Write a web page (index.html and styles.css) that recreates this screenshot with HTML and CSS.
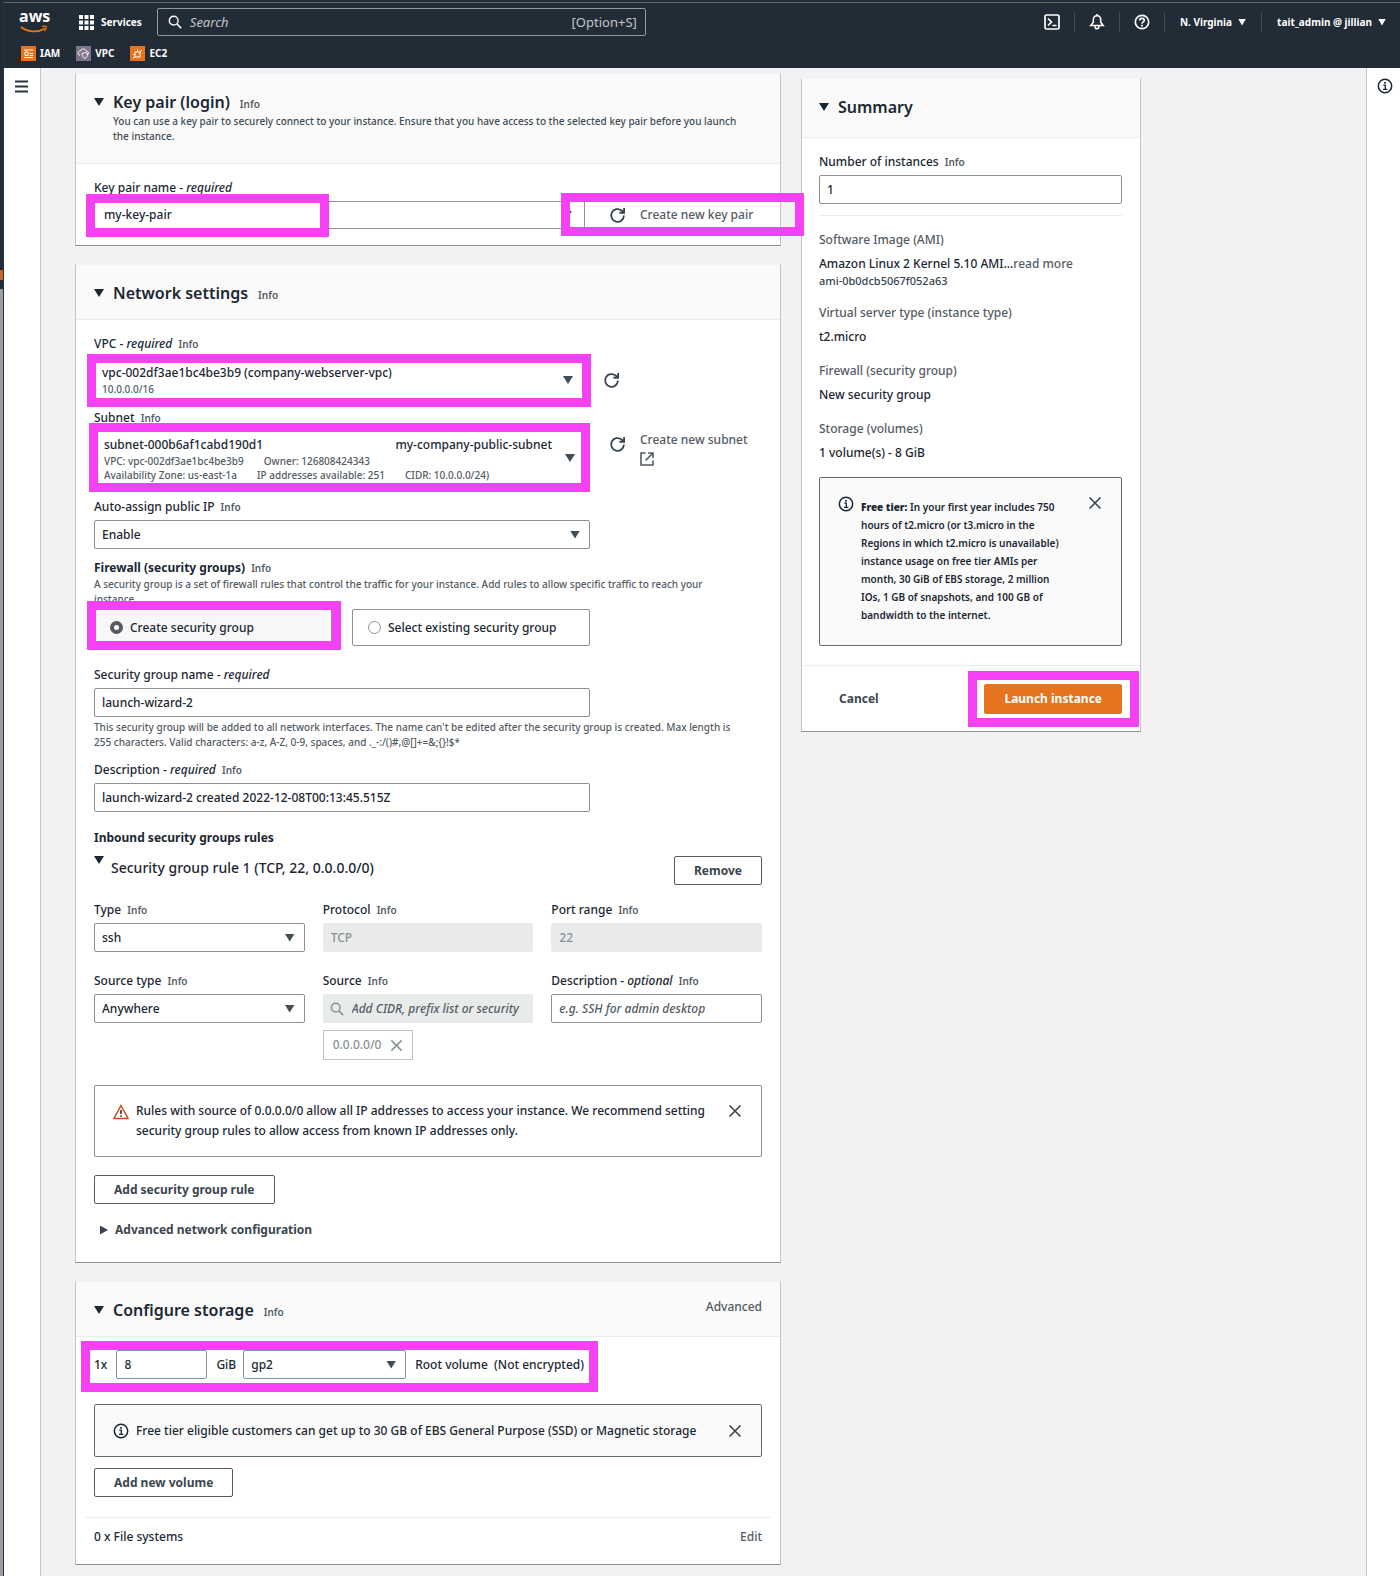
FILE: index.html
```html
<!DOCTYPE html>
<html lang="en">
<head>
<meta charset="utf-8">
<meta name="viewport" content="width=device-width, initial-scale=1">
<title>Launch an instance | EC2</title>
<link rel="stylesheet" href="styles.css">
</head>
<body>
<svg class="defs" width="0" height="0" aria-hidden="true">
  <symbol id="refresh" viewBox="0 0 16 16"><path d="M14 8a6 6 0 1 1-2.2-4.7L14 5" fill="none" stroke="currentColor" stroke-width="1.7"/><path d="M14.2 1v4.4H9.8" fill="none" stroke="currentColor" stroke-width="1.7"/></symbol>
  <symbol id="close" viewBox="0 0 14 14"><path d="M1.5 1.5l11 11M12.500 1.500l-11 11" fill="none" stroke="currentColor" stroke-width="1.6"/></symbol>
  <symbol id="info" viewBox="0 0 16 16"><circle cx="8" cy="8" r="6.700" fill="none" stroke="currentColor" stroke-width="1.500"/><path d="M6.300 7.200H8.300V11.200M6 11.300h4.400" fill="none" stroke="currentColor" stroke-width="1.300"/><rect x="7.100" y="4" width="1.700" height="1.700" fill="currentColor"/></symbol>
  <symbol id="search" viewBox="0 0 16 16"><circle cx="6.500" cy="6.500" r="5" fill="none" stroke="currentColor" stroke-width="1.600"/><path d="M10 10l5 5" fill="none" stroke="currentColor" stroke-width="1.800"/></symbol>
</svg>
<div class="page">
  <div class="edge"></div>
  <div class="console">
    <header class="topbar">
      <div class="bar">
        <a class="logo" href="#" aria-label="aws">
          <span>aws</span>
          <svg width="30" height="9" viewBox="0 0 30 9"><path d="M2 2c7 5.500 17 5.800 24 1.500" fill="none" stroke="#ec7211" stroke-width="1.800"/><path d="M23 1.500c3-.8 4.500-.5 4.300.4-.1 1.600-.7 3-1.800 4.300" fill="none" stroke="#ec7211" stroke-width="1.300"/></svg>
        </a>
        <button class="services" type="button">
          <svg width="15" height="15" viewBox="0 0 15 15" fill="#fff"><path d="M0 0h4v4H0zM5.500 0h4v4h-4zM11 0h4v4h-4zM0 5.500h4v4H0zM5.500 5.500h4v4h-4zM11 5.500h4v4h-4zM0 11h4v4H0zM5.500 11h4v4h-4zM11 11h4v4h-4z"/></svg>
          Services
        </button>
        <div class="search">
          <svg width="14" height="14"><use href="#search"/></svg>
          <input type="search" placeholder="Search" aria-label="Search">
          <span>[Option+S]</span>
        </div>
        <nav class="tools">
          <button type="button" aria-label="CloudShell"><svg width="16" height="16" viewBox="0 0 16 16" fill="none" stroke="#fff" stroke-width="1.700"><rect x="1" y="1" width="14" height="14" rx="1.500"/><path d="M4 4.500L7.500 8 4 11.500M8.500 11.500h4"/></svg></button>
          <button type="button" aria-label="Notifications"><svg width="16" height="16" viewBox="0 0 16 16" fill="none" stroke="#fff" stroke-width="1.600"><path d="M8 1.800c-2.500 0-3.700 1.700-3.700 4v2.400L1.800 11.500h12.400l-2.500-3.300V5.800c0-2.300-1.200-4-3.700-4z"/><path d="M6.200 12v1.200c0 2 3.600 2 3.600 0V12M8 0v2"/></svg></button>
          <button type="button" aria-label="Help"><svg width="16" height="16" viewBox="0 0 16 16" fill="none" stroke="#fff" stroke-width="1.700"><circle cx="8" cy="8" r="6.700"/><path d="M5.700 6.500c0-3 4.600-2.800 4.600-.2C10.300 8 8 7.800 8 9.700M8 10.800v1.700"/></svg></button>
          <button type="button">N. Virginia <i class="caret"></i></button>
          <button type="button">tait_admin @ jillian <i class="caret"></i></button>
        </nav>
      </div>
      <nav class="favorites">
        <a href="#"><svg width="15" height="15" viewBox="0 0 15 15"><path fill="#e8731c" d="M0 0h15v15H0z"/><path d="M3 4h9M3 11.500h9M4 6v3.500h3V6zM8.500 7.500H12M8.500 9.500H12" fill="none" stroke="#fff"/></svg>IAM</a>
        <a href="#"><svg width="15" height="15" viewBox="0 0 15 15"><path fill="#7f748c" d="M0 0h15v15H0z"/><path d="M4 9.500C1 8.500 2 5 4.500 5 5.500 2 9.500 2.500 10 5c2.500 0 3 2 2 3.500M6 7.500c2-1 4-1 5.500 0 0 3-1 4-2.700 5C7 11.500 6 10 6 7.500z" fill="none" stroke="#fff"/></svg>VPC</a>
        <a href="#"><svg width="15" height="15" viewBox="0 0 15 15"><path fill="#e8731c" d="M0 0h15v15H0z"/><path d="M5 6h5v5H5zM7.500 3v3M10 6l2-2M3 8.500h2M5 11l-2 1" fill="none" stroke="#fff"/></svg>EC2</a>
      </nav>
    </header>
    <div class="workspace">
      <aside class="rail rail-left">
        <button type="button" aria-label="Open navigation"><svg width="13" height="13" viewBox="0 0 13 13"><path d="M0 1.500h13M0 6.500h13M0 11.500h13" stroke="#28343f" stroke-width="1.800"/></svg></button>
      </aside>
      <main class="content">
        <div class="columns">
          <div class="forms">
            <section class="card">
              <header class="card-head">
                <h2><i class="caret"></i>Key pair (login) <a class="info" href="#">Info</a></h2>
                <p>You can use a key pair to securely connect to your instance. Ensure that you have access to the selected key pair before you launch the instance.</p>
              </header>
              <div class="card-body">
                <label class="label" for="key">Key pair name - <em>required</em></label>
                <div class="row key-row">
                  <div class="select key-select"><select id="key"><option>my-key-pair</option></select><span class="mark mark-key"></span></div>
                  <button class="icon" type="button" aria-label="Refresh key pairs"><svg width="17" height="17"><use href="#refresh"/></svg></button>
                  <a class="link" href="#">Create new key pair</a>
                  <span class="mark mark-create"></span>
                </div>
              </div>
            </section>

            <section class="card">
              <header class="card-head">
                <h2><i class="caret"></i>Network settings <a class="info" href="#">Info</a></h2>
              </header>
              <div class="card-body network">
                <div class="field">
                  <div class="label" id="vpc-label">VPC - <em>required</em> <a class="info" href="#">Info</a></div>
                  <div class="row vpc-row">
                    <div class="select rich-wrap">
                      <button class="rich vpc" type="button" aria-labelledby="vpc-label"><b>vpc-002df3ae1bc4be3b9 (company-webserver-vpc)</b><small>10.0.0.0/16</small></button>
                      <span class="mark mark-vpc"></span>
                    </div>
                    <button class="icon" type="button" aria-label="Refresh VPCs"><svg width="17" height="17"><use href="#refresh"/></svg></button>
                  </div>
                </div>
                <div class="field tight">
                  <div class="label subnet-label" id="subnet-label">Subnet <a class="info" href="#">Info</a></div>
                  <div class="row subnet-row">
                    <div class="select rich-wrap">
                      <button class="rich subnet" type="button" aria-labelledby="subnet-label">
                        <span class="split"><b>subnet-000b6af1cabd190d1</b><b>my-company-public-subnet</b></span>
                        <small><span>VPC: vpc-002df3ae1bc4be3b9</span><span>Owner: 126808424343</span></small>
                        <small><span>Availability Zone: us-east-1a</span><span>IP addresses available: 251</span><span>CIDR: 10.0.0.0/24)</span></small>
                      </button>
                      <span class="mark mark-subnet"></span>
                    </div>
                    <button class="icon" type="button" aria-label="Refresh subnets"><svg width="17" height="17"><use href="#refresh"/></svg></button>
                    <a class="link" href="#">Create new subnet<svg width="14" height="14" viewBox="0 0 14 14" fill="none" stroke="#545b64" stroke-width="1.600"><path d="M5.500 1H1v12h12V8.500M8 1h5v5M13 1L5.500 8.500"/></svg></a>
                  </div>
                </div>
                <div class="field tight narrow">
                  <div class="label"><label for="autoip">Auto-assign public IP</label> <a class="info" href="#">Info</a></div>
                  <div class="select"><select id="autoip"><option>Enable</option></select></div>
                </div>
                <fieldset class="field firewall">
                  <legend class="label strong">Firewall (security groups) <a class="info" href="#">Info</a></legend>
                  <p class="hint">A security group is a set of firewall rules that control the traffic for your instance. Add rules to allow specific traffic to reach your instance.</p>
                  <div class="tiles">
                    <label class="tile chosen"><input type="radio" name="sg" checked>Create security group<span class="mark mark-tile"></span></label>
                    <label class="tile"><input type="radio" name="sg">Select existing security group</label>
                  </div>
                </fieldset>
                <div class="field">
                  <label class="label" for="sgname">Security group name - <em>required</em></label>
                  <input class="input narrow" id="sgname" type="text" value="launch-wizard-2">
                  <p class="hint below">This security group will be added to all network interfaces. The name can't be edited after the security group is created. Max length is 255 characters. Valid characters: a-z, A-Z, 0-9, spaces, and ._-:/()#,@[]+=&amp;;{}!$*</p>
                </div>
                <div class="field">
                  <div class="label"><label for="sgdesc">Description - <em>required</em></label> <a class="info" href="#">Info</a></div>
                  <input class="input narrow" id="sgdesc" type="text" value="launch-wizard-2 created 2022-12-08T00:13:45.515Z">
                </div>
                <h3 class="label strong inbound">Inbound security groups rules</h3>
                <div class="rule-head">
                  <h4><i class="caret"></i>Security group rule 1 (TCP, 22, 0.0.0.0/0)</h4>
                  <button class="button" type="button">Remove</button>
                </div>
                <div class="rule-grid">
                  <div>
                    <div class="label"><label for="type">Type</label> <a class="info" href="#">Info</a></div>
                    <div class="select"><select id="type"><option>ssh</option></select></div>
                  </div>
                  <div>
                    <div class="label"><label for="proto">Protocol</label> <a class="info" href="#">Info</a></div>
                    <input class="input" id="proto" type="text" value="TCP" disabled>
                  </div>
                  <div>
                    <div class="label"><label for="port">Port range</label> <a class="info" href="#">Info</a></div>
                    <input class="input" id="port" type="text" value="22" disabled>
                  </div>
                  <div>
                    <div class="label"><label for="stype">Source type</label> <a class="info" href="#">Info</a></div>
                    <div class="select"><select id="stype"><option>Anywhere</option></select></div>
                  </div>
                  <div>
                    <div class="label"><label for="source">Source</label> <a class="info" href="#">Info</a></div>
                    <div class="source"><svg width="14" height="14"><use href="#search"/></svg><input id="source" type="text" placeholder="Add CIDR, prefix list or security" disabled></div>
                    <span class="token">0.0.0.0/0 <button type="button" aria-label="Remove 0.0.0.0/0" disabled><svg width="13" height="13"><use href="#close"/></svg></button></span>
                  </div>
                  <div>
                    <div class="label"><label for="rdesc">Description - <em>optional</em></label> <a class="info" href="#">Info</a></div>
                    <input class="input" id="rdesc" type="text" placeholder="e.g. SSH for admin desktop">
                  </div>
                </div>
                <div class="alert warning">
                  <svg class="alert-icon" width="16" height="16" viewBox="0 0 16 16"><path d="M8 1.500L15 14.500H1z" fill="none" stroke="#c8501a" stroke-width="1.500"/><path d="M8 6v4M8 11.200v1.600" stroke="#3b3431" stroke-width="1.600"/></svg>
                  <p>Rules with source of 0.0.0.0/0 allow all IP addresses to access your instance. We recommend setting security group rules to allow access from known IP addresses only.</p>
                  <button class="icon" type="button" aria-label="Dismiss"><svg width="14" height="14"><use href="#close"/></svg></button>
                </div>
                <button class="button add-rule" type="button">Add security group rule</button>
                <button class="advanced" type="button"><i class="caret side"></i>Advanced network configuration</button>
              </div>
            </section>

            <section class="card">
              <header class="card-head with-action">
                <h2><i class="caret"></i>Configure storage <a class="info" href="#">Info</a></h2>
                <a class="link" href="#">Advanced</a>
              </header>
              <div class="card-body storage">
                <div class="volume">
                  <span>1x</span>
                  <input class="input size" type="text" value="8" aria-label="Size in GiB">
                  <span>GiB</span>
                  <div class="select type"><select aria-label="Volume type"><option>gp2</option></select></div>
                  <span>Root volume&nbsp; (Not encrypted)</span>
                  <span class="mark mark-volume"></span>
                </div>
                <div class="alert tip">
                  <svg class="alert-icon" width="16" height="16"><use href="#info"/></svg>
                  <p>Free tier eligible customers can get up to 30 GB of EBS General Purpose (SSD) or Magnetic storage</p>
                  <button class="icon" type="button" aria-label="Dismiss"><svg width="14" height="14"><use href="#close"/></svg></button>
                </div>
                <button class="button" type="button">Add new volume</button>
                <div class="files"><span>0 x File systems</span><a class="link" href="#">Edit</a></div>
              </div>
            </section>
          </div>

          <aside class="card summary">
            <header class="card-head"><h2><i class="caret"></i>Summary</h2></header>
            <div class="card-body">
              <div class="label"><label for="count">Number of instances</label> <a class="info" href="#">Info</a></div>
              <input class="input" id="count" type="text" value="1">
              <dl>
                <dt>Software Image (AMI)</dt>
                <dd>Amazon Linux 2 Kernel 5.10 AMI...<a class="link" href="#">read more</a><small>ami-0b0dcb5067f052a63</small></dd>
                <dt>Virtual server type (instance type)</dt>
                <dd>t2.micro</dd>
                <dt>Firewall (security group)</dt>
                <dd>New security group</dd>
                <dt>Storage (volumes)</dt>
                <dd>1 volume(s) - 8 GiB</dd>
              </dl>
              <div class="alert free">
                <svg class="alert-icon" width="16" height="16"><use href="#info"/></svg>
                <p><strong>Free tier:</strong> In your first year includes 750 hours of t2.micro (or t3.micro in the Regions in which t2.micro is unavailable) instance usage on free tier AMIs per month, 30 GiB of EBS storage, 2 million IOs, 1 GB of snapshots, and 100 GB of bandwidth to the internet.</p>
                <button class="icon" type="button" aria-label="Dismiss"><svg width="14" height="14"><use href="#close"/></svg></button>
              </div>
            </div>
            <footer class="actions">
              <button class="cancel" type="button">Cancel</button>
              <div class="launch-wrap"><button class="launch" type="button">Launch instance</button><span class="mark mark-launch"></span></div>
            </footer>
          </aside>
        </div>
      </main>
      <aside class="rail rail-right">
        <button type="button" aria-label="Open help panel"><svg width="16" height="16"><use href="#info"/></svg></button>
      </aside>
    </div>
  </div>
</div>
</body>
</html>
```
FILE: styles.css
```css
* { box-sizing: border-box; }
:root {
  --ink: #1b2733;
  --muted: #545b64;
  --line: #879196;
  --pink: #f640f3;
  --navy: #222c37;
}
body {
  margin: 0;
  background: #f2f2f2;
  color: var(--ink);
  font: 500 12px/18px "Noto Sans", "Open Sans", sans-serif;
}
h2, h3, h4, p, dl, dd { margin: 0; }
button, input, select { font: inherit; color: inherit; }
button { background: none; border: 0; padding: 0; }
a { color: inherit; text-decoration: none; }
.defs { position: absolute; }
svg { display: block; flex: none; }

.page { display: flex; min-height: 100vh; }
.edge {
  width: 4px;
  border-right: 1px solid #28323c;
  background: linear-gradient(#222c37 270px, #c9651f 270px, #c9651f 280px, #222c37 280px, #222c37 289px, #9a9fa3 289px);
}
.console { flex: 1; min-width: 0; display: flex; flex-direction: column; }

/* Top navigation */
.topbar { height: 68px; background: var(--navy); border-top: 2px solid var(--navy); color: #fff; font-size: 10px; font-weight: 700; }
.bar { display: flex; align-items: center; height: 39px; border-top: 1px solid #5d686b; }
.logo { width: 44px; height: 27px; padding-left: 15px; font: 700 16px/14px "Open Sans", sans-serif; }
.logo svg { margin-top: 2px; }
.services { display: flex; align-items: center; gap: 7px; margin-left: 31px; }
.search { display: flex; align-items: center; gap: 8px; flex: 0 1 489px; height: 28px; margin-left: 15px; padding: 0 8px 0 10px; border: 1px solid #939a9f; border-radius: 2px; color: #c3c6c8; font-size: 13px; font-weight: 400; }
.search svg { color: #fff; }
.search input { flex: 1; min-width: 0; padding: 0; border: 0; outline: 0; background: none; }
input::placeholder { color: var(--muted); font-style: italic; opacity: 1; }
.search input::placeholder { color: #c3c6c8; }
.tools { display: flex; align-items: center; margin-left: auto; }
.tools button { display: flex; align-items: center; gap: 6px; height: 20px; padding: 0 14px; border-left: 1px solid #424d58; white-space: nowrap; }
.tools button:first-child { border-left: 0; }
.tools button:nth-child(4) { padding: 0 15px; }
.tools button:last-child { padding: 0 14px 0 15px; }
.favorites { display: flex; gap: 16px; padding: 2px 0 0 17px; }
.favorites a { display: flex; align-items: center; gap: 4px; height: 20px; }
.caret { flex: none; width: 10px; height: 8px; background: currentColor; clip-path: polygon(0 0, 100% 0, 50% 100%); }
.tools .caret { width: 8px; height: 7px; }
.caret.side { width: 8px; height: 9px; clip-path: polygon(0 0, 100% 50%, 0 100%); }

/* Workspace */
.workspace { flex: 1; display: flex; }
.rail { flex: none; background: #fff; padding-top: 12px; }
.rail-left { width: 37px; border-right: 1px solid #c3c5c5; padding-left: 11px; }
.rail-right { width: 34px; border-left: 1px solid #c3c5c5; padding: 10px 0 0 10px; }
.content { flex: 1; min-width: 0; padding: 5px 20px 9px 34px; }
.columns { display: grid; grid-template-columns: minmax(0, 1fr) 340px; gap: 20px; align-items: start; max-width: 1066px; }
.forms { display: grid; gap: 18px; }

/* Cards */
.card { background: #fff; border: 1px solid #c0c4c4; border-top-color: #f2f2f2; border-bottom-color: var(--line); }
.card-head { padding: 16px 18px 14px; background: #fafafa; border-bottom: 1px solid #eaeded; }
.card-head h2 { display: flex; align-items: center; font-size: 16px; line-height: 24px; font-weight: 600; }
.card-head h2 .caret { margin-right: 9px; }
.card-head h2 .info { margin: 4px 0 0 10px; line-height: 18px; }
.card-head p { margin: 0 10px 5px 19px; font-size: 10px; line-height: 15px; color: #414b55; }
.with-action { display: flex; justify-content: space-between; }
.card-body { padding: 15px 18px 16px; }
.card-body.network { padding-bottom: 17px; }
.info { font-size: 10px; line-height: 16px; font-weight: 600; color: var(--muted); margin-left: 3px; }
.link { color: var(--muted); }
.label { display: block; height: 18px; margin: 0 0 4px; padding: 0; font-size: 12px; font-weight: 500; line-height: 18px; }
.strong { font-weight: 700; }
.hint { padding-right: 16px; font-size: 10px; line-height: 15px; font-weight: 500; color: var(--muted); }
.narrow { max-width: 496px; }

/* Controls */
.input, .select select, .rich { display: block; width: 100%; height: 29px; padding: 0 7px; border: 1px solid var(--line); border-radius: 2px; background: #fff; }
.select { position: relative; }
.select select { appearance: none; }
.select::after { content: ""; position: absolute; right: 10px; top: calc(50% - 4px); width: 10px; height: 8px; background: #414d57; clip-path: polygon(0 0, 100% 0, 50% 100%); pointer-events: none; }
.input:disabled, .source { background: #e9ebeb; border-color: #e9ebeb; color: #879196; }
.button { height: 29px; padding: 0 19px; border: 1px solid var(--muted); border-radius: 2px; background: #fff; color: #3c4650; font-weight: 700; }
.row { position: relative; display: flex; }
.icon { display: block; color: #37434e; }
.mark { position: absolute; z-index: 2; border: 9px solid var(--pink); pointer-events: none; }

.key-row { align-items: center; }
.key-select { width: 491px; }
.key-select select { height: 28px; padding-left: 9px; }
.key-select::after { right: 13px; }
.key-row .icon { margin: 0 14px 0 24px; }
.mark-key { left: -8px; top: -7px; width: 243px; height: 43px; }
.mark-create { right: -42px; top: -8px; width: 243px; height: 43px; }

.field { margin: 0 0 11px; padding: 0; border: 0; min-width: 0; }
.rich { text-align: left; }
.rich b { font-weight: 500; }
.rich small { display: flex; gap: 20px; font-size: 10px; font-weight: 500; line-height: 14px; color: var(--muted); white-space: nowrap; }
.vpc-row { align-items: center; }
.vpc-row .rich-wrap { width: 489px; }
.vpc-row .icon { margin-left: 20px; }
.rich.vpc { height: 46px; }
.mark-vpc { inset: -3px -8px -4px -7px; }
.field:first-child { margin-bottom: 6px; }
.subnet-label { margin-bottom: 1px; }
.subnet-row .rich-wrap { width: 491px; }
.rich.subnet { height: 60px; padding: 2px 9px 0; }
.split { display: flex; justify-content: space-between; padding-right: 23px; }
.mark-subnet { inset: -5px -5px -4px -5px; }
.subnet-row .icon { align-self: flex-start; margin: 8px 14px 0 24px; }
.subnet-row .link svg { margin-top: 3px; }
.subnet-row .link { padding-top: 3px; }
.field.tight { margin-bottom: 10px; }
.firewall .label { margin-bottom: 0; }
.field.firewall { margin-bottom: 20px; }
.tiles { display: grid; grid-template-columns: 1fr 1fr; gap: 20px; max-width: 496px; margin-top: 2px; }
.tile { position: relative; display: flex; align-items: center; gap: 7px; height: 37px; padding-left: 15px; border: 1px solid var(--line); border-radius: 2px; }
.tile.chosen { background: #f7f7f7; }
.tile input { appearance: none; width: 13px; height: 13px; margin: 0; border: 1px solid var(--line); border-radius: 50%; background: #fff; }
.tile input:checked { border: 4px solid #545b64; }
.mark-tile { inset: -9px -10px -5px -8px; }
.below { margin-top: 3px; }
.inbound { margin: 17px 0 9px; }
.rule-head { display: flex; justify-content: space-between; align-items: flex-start; margin-bottom: 16px; }
.rule-head h4 { display: flex; font-size: 14px; line-height: 24px; font-weight: 500; gap: 7px; }
.rule-grid { display: grid; grid-template-columns: repeat(3, minmax(0, 1fr)); gap: 20px 18px; }
.source { display: flex; align-items: center; gap: 8px; height: 29px; padding: 0 7px; }
.source input { width: 100%; min-width: 0; padding: 0; border: 0; background: none; }
.token { display: inline-flex; align-items: center; gap: 9px; height: 30px; margin-top: 7px; padding: 0 9px; border: 1px solid #c0c4c4; color: #879196; }
.alert { display: flex; align-items: flex-start; gap: 7px; border: 1px solid var(--line); border-radius: 2px; background: #fff; }
.alert p { flex: 1; min-width: 0; }
.warning { margin: 25px 0 18px; padding: 15px 19px 15px 18px; line-height: 20px; }
.warning .icon, .warning .alert-icon { margin-top: 3px; }
.warning .icon { margin-left: 13px; }
.add-rule { display: block; }
.advanced { display: flex; align-items: center; gap: 7px; margin: 17px 0 6px 6px; font-weight: 700; color: #3c4650; }

/* Storage */
.storage { padding-top: 13px; }
.volume { position: relative; display: flex; align-items: center; margin-bottom: 25px; width: fit-content; }
.volume .size { width: 91px; margin: 0 9px; }
.volume .type { width: 163px; margin: 0 9px 0 7px; }
.mark-volume { left: -13px; top: -9px; width: 517px; height: 51px; }
.tip { align-items: center; height: 53px; margin-bottom: 11px; padding: 0 19px 0 18px; background: #fafafa; border-color: #5f6b73; }
.files { display: flex; justify-content: space-between; margin: 20px -9px 0; padding: 10px 9px 2px; border-top: 1px solid #eaeded; }

/* Summary */
.summary { margin-top: 5px; }
.summary .card-head { padding: 16px 17px 18px; }
.summary .card-body { padding: 15px 18px 19px 17px; }
.summary dl { margin-top: 11px; padding-top: 15px; border-top: 1px solid #eaeded; }
.summary dt { color: var(--muted); margin-bottom: 6px; }
.summary dd { margin-bottom: 16px; }
.summary dd:last-child { margin-bottom: 15px; }
.summary dd small { display: block; font-size: 11px; line-height: 15px; color: #37434e; }
.free { padding: 18px 19px 21px 18px; background: #fafafa; border-color: #5f6b73; font-size: 10px; font-weight: 600; }
.free .icon { margin-left: 14px; }
.free p { margin-top: 2px; }
.actions { display: flex; align-items: center; justify-content: space-between; padding: 18px 18px 17px 37px; border-top: 1px solid #eaeded; }
.cancel { font-weight: 700; color: #3c4650; }
.launch-wrap { position: relative; }
.launch { display: block; height: 30px; padding: 0 20px; border-radius: 2px; background: #e6731d; color: #fff; font-weight: 700; }
.mark-launch { inset: -13px -17px -13px -16px; }
```
